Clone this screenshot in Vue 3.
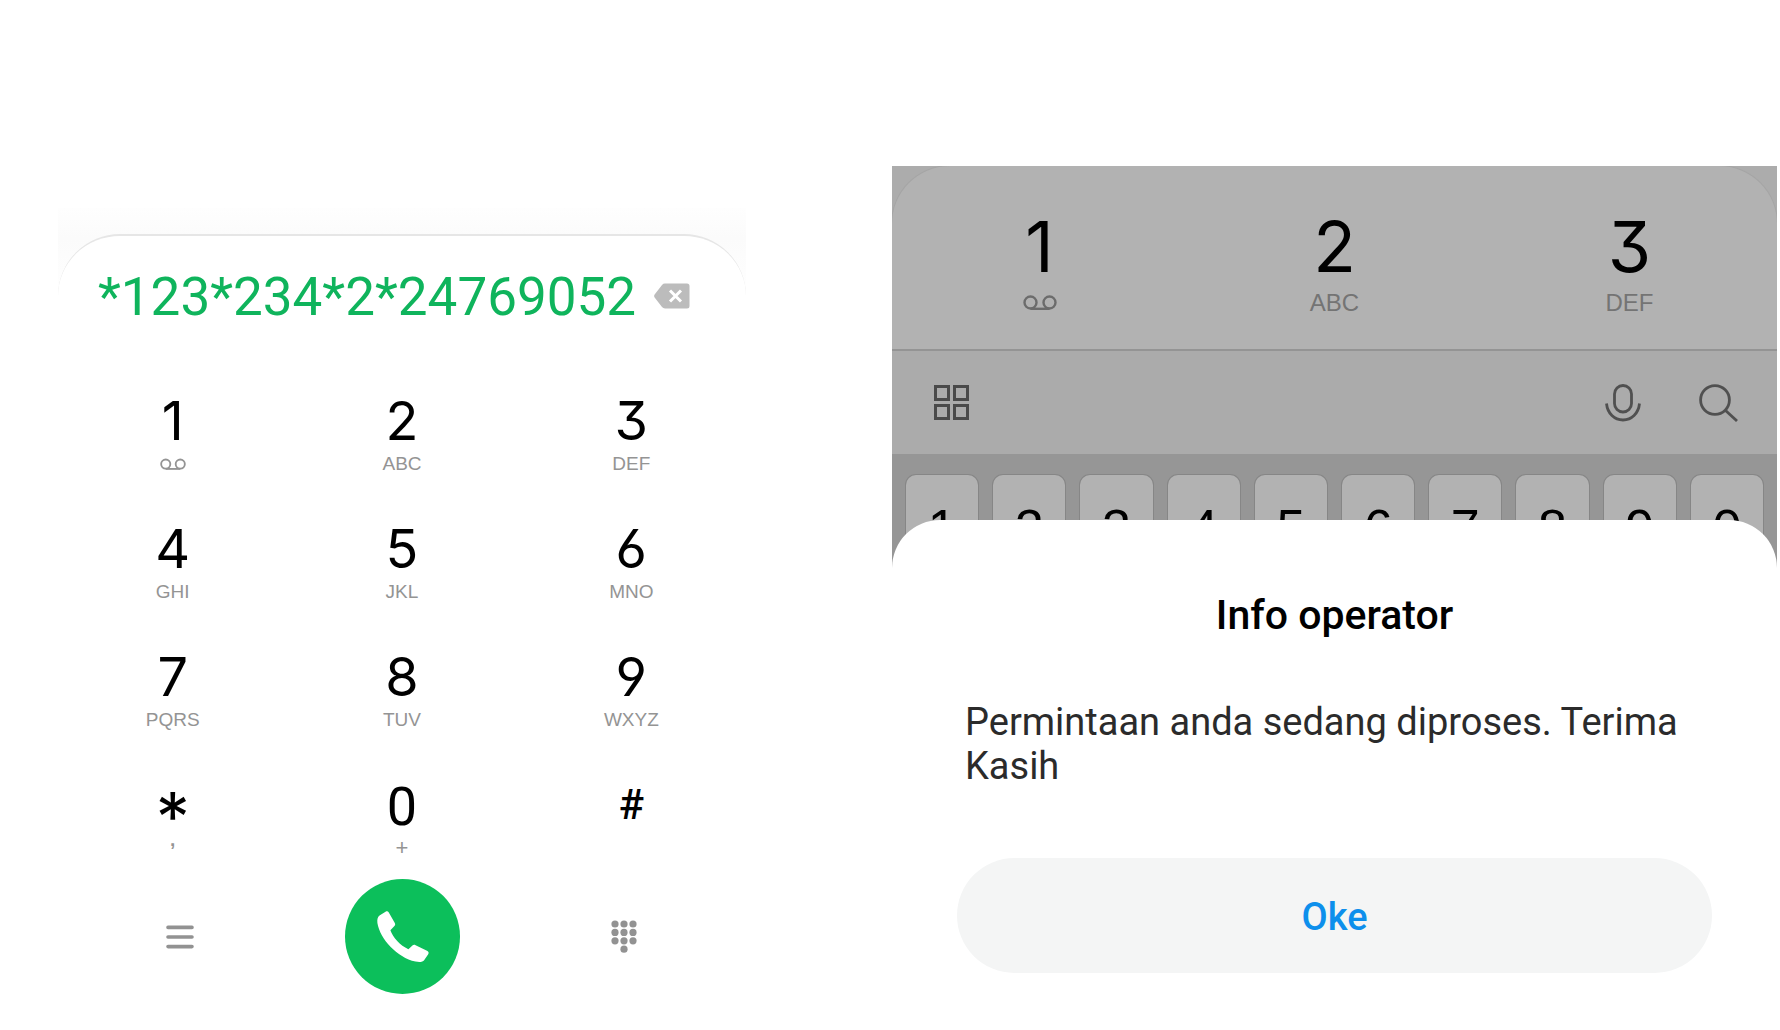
<template>
    <main class="page">
        <section class="dialer">
            <div class="dialer-card">
                <div class="display">
                    <input v-model="number" class="display-input" type="text" aria-label="Nomor" />
                    <button class="icon-button" type="button" aria-label="Hapus" @click="erase">
                        <svg width="36" height="26" viewBox="0 0 36 26">
                            <path d="M11 0.5H33a2.5 2.5 0 0 1 2.5 2.5V23a2.5 2.5 0 0 1-2.5 2.5H11a4 4 0 0 1-3-1.4L1 15a3 3 0 0 1 0-4L8 1.9a4 4 0 0 1 3-1.4z" fill="#bcbcbc" />
                            <path d="M16 7.5l11 11M27 7.5l-11 11" stroke="#fff" stroke-width="3" />
                        </svg>
                    </button>
                </div>
                <div class="keypad">
                    <button v-for="key in keys" :key="key.digit" class="key" type="button" @click="press(key.digit)">
                        <span class="key-digit" :class="key.kind">{{ key.digit }}</span>
                        <span v-if="key.voicemail" class="key-letters">
                            <svg width="26" height="13" viewBox="0 0 34 16" class="voicemail">
                                <circle cx="7.5" cy="7.5" r="6" />
                                <circle cx="26.5" cy="7.5" r="6" />
                                <path d="M7.5 13.8h19" />
                            </svg>
                        </span>
                        <span v-else class="key-letters">{{ key.letters }}</span>
                    </button>
                </div>
                <div class="actions">
                    <button class="icon-button" type="button" aria-label="Menu">
                        <svg width="28" height="24" viewBox="0 0 28 24">
                            <path d="M2 2.4h24M2 12h24M2 21.6h24" stroke="#929292" stroke-width="3.6" stroke-linecap="round" />
                        </svg>
                    </button>
                    <button class="call-button" type="button" aria-label="Panggil">
                        <svg width="54" height="52" viewBox="-2 0 54 52">
                            <path d="M2.5 4.5L8.5 0.8C10 0 11 .3 11.8 1.6L17.8 12C18.5 13.3 18.2 14.2 17.2 15.2L13.4 19.3C16 26.5 23 34.5 31.4 38.2L35.4 34.6C36.4 33.7 37.4 33.6 38.6 34.2L50 39.8C51.7 40.7 52 41.8 51.2 43.2L47.3 49C45.5 51.3 42.5 51.5 38.5 50.6C20 46.5 3 28 .4 12C0 8.5 .6 6 2.5 4.5Z" fill="#fff" />
                        </svg>
                    </button>
                    <button class="icon-button" type="button" aria-label="Papan tombol">
                        <svg width="26" height="34" viewBox="0 0 26 34">
                            <circle v-for="dot in dots" :key="dot.id" :cx="dot.x" :cy="dot.y" r="3.6" fill="#929292" />
                        </svg>
                    </button>
                </div>
            </div>
        </section>

        <section class="operator">
            <div class="backdrop">
                <div class="dimmed-pad">
                    <div v-for="key in keys.slice(0, 3)" :key="key.digit" class="dimmed-key">
                        <span class="dimmed-digit">{{ key.digit }}</span>
                        <span v-if="key.voicemail" class="dimmed-letters">
                            <svg width="34" height="16" viewBox="0 0 34 16" class="voicemail dark">
                                <circle cx="7.5" cy="7.5" r="6" />
                                <circle cx="26.5" cy="7.5" r="6" />
                                <path d="M7.5 13.8h19" />
                            </svg>
                        </span>
                        <span v-else class="dimmed-letters">{{ key.letters }}</span>
                    </div>
                </div>
            </div>
            <div class="toolbar">
                <button class="icon-button toolbar-start" type="button" aria-label="Aplikasi">
                    <svg width="36" height="36" viewBox="0 0 36 36" fill="none" stroke="#4a4a4a" stroke-width="3">
                        <rect x="2.5" y="1.5" width="13" height="13" />
                        <rect x="21.5" y="1.5" width="13" height="13" />
                        <rect x="2.5" y="20.5" width="13" height="13" />
                        <rect x="21.5" y="20.5" width="13" height="13" />
                    </svg>
                </button>
                <button class="icon-button" type="button" aria-label="Suara">
                    <svg width="36" height="38" viewBox="0 0 36 38" fill="none" stroke="#505050" stroke-width="2.8">
                        <rect x="9.5" y="1.5" width="17" height="26.5" rx="8.5" />
                        <path d="M1.5 19.5c1 10 8 16.5 16.5 16.5s15.5-6.5 16.5-16.5" />
                    </svg>
                </button>
                <button class="icon-button" type="button" aria-label="Cari">
                    <svg width="40" height="38" viewBox="0 0 40 38" fill="none" stroke="#505050" stroke-width="2.8">
                        <circle cx="16" cy="16" r="14.4" />
                        <path d="M26 26l12 11" />
                    </svg>
                </button>
            </div>
            <div class="keyboard">
                <span v-for="n in row" :key="n" class="keyboard-key">{{ n }}</span>
            </div>
            <div class="dialog" role="dialog" aria-labelledby="dialog-title">
                <h1 id="dialog-title" class="dialog-title">Info operator</h1>
                <p class="dialog-text">Permintaan anda sedang diproses. Terima Kasih</p>
                <button class="dialog-button" type="button">Oke</button>
            </div>
        </section>
    </main>
</template>

<script setup>
import { ref } from 'vue';

const number = ref('*123*234*2*24769052');

const keys = [
    { digit: '1', voicemail: true },
    { digit: '2', letters: 'ABC' },
    { digit: '3', letters: 'DEF' },
    { digit: '4', letters: 'GHI' },
    { digit: '5', letters: 'JKL' },
    { digit: '6', letters: 'MNO' },
    { digit: '7', letters: 'PQRS' },
    { digit: '8', letters: 'TUV' },
    { digit: '9', letters: 'WXYZ' },
    { digit: '*', letters: ',', kind: 'star' },
    { digit: '0', letters: '+', kind: 'zero' },
    { digit: '#', letters: '', kind: 'hash' }
];

const row = ['1', '2', '3', '4', '5', '6', '7', '8', '9', '0'];

// three rows of three, plus one dot below the middle
const dots = Array.from({ length: 10 }, (_, i) => ({
    id: i,
    x: i === 9 ? 13 : 4 + (i % 3) * 9,
    y: 4 + Math.floor(i / 3) * 8.4
}));

const press = (digit) => {
    number.value += digit;
};

const erase = () => {
    number.value = number.value.slice(0, -1);
};
</script>

<style>
body {
    margin: 0;
    background: #fff;
}
</style>

<style scoped>
.page {
    display: grid;
    grid-template-columns: minmax(0, 688fr) minmax(0, 885fr);
    gap: 146px;
    align-items: start;
    padding: 0 3px 0 58px;
    font-family: Roboto, sans-serif;
}

button {
    padding: 0;
    border: 0;
    background: none;
    font-family: inherit;
    cursor: pointer;
}

svg {
    display: block;
}

.dialer {
    margin-top: 208px;
    padding-top: 26px;
    background: linear-gradient(#fefefe, #fbfbfb 30px, #fff 96px);
}

.dialer-card {
    border-top: 2px solid #e6e6e6;
    border-radius: 62px 62px 0 0;
    background: #fff;
}

.display {
    display: flex;
    align-items: center;
    padding: 32px 56px 0 40px;
}

.display-input {
    flex: 1;
    min-width: 0;
    height: 54px;
    padding: 2px 0 0;
    border: 0;
    outline: 0;
    background: none;
    font-family: inherit;
    font-size: 53px;
    line-height: 54px;
    color: #0fb45c;
}

.keypad {
    display: grid;
    grid-template-columns: repeat(3, 1fr);
    row-gap: 48px;
    margin-top: 70px;
}

.key {
    display: flex;
    flex-direction: column;
    align-items: center;
    gap: 6px;
}

.key-digit {
    height: 54px;
    font-family: Inter, sans-serif;
    font-feature-settings: 'cv09', 'cv03', 'cv04';
    font-size: 54px;
    line-height: 54px;
    color: #000;
}

.key-digit.star {
    font-size: 68px;
    line-height: 76px;
}

.key-digit.zero {
    font-family: Roboto, sans-serif;
    line-height: 58px;
}

.key-digit.hash {
    font-family: Roboto, sans-serif;
    font-size: 42px;
    font-weight: 500;
    line-height: 54px;
}

.key-letters {
    display: flex;
    align-items: center;
    height: 20px;
    font-family: 'Liberation Sans', sans-serif;
    font-size: 19px;
    line-height: 20px;
    color: #949494;
}

.star + .key-letters {
    height: 4px;
    font-weight: 700;
}

.zero + .key-letters {
    font-size: 22px;
}

.voicemail {
    fill: none;
    stroke: #949494;
    stroke-width: 2.4;
}

.voicemail.dark {
    stroke: #6c6c6c;
}

.actions {
    display: grid;
    grid-template-columns: repeat(3, 1fr);
    place-items: center;
    margin-top: 21px;
    padding: 0 11px;
}

.call-button {
    display: grid;
    place-items: center;
    width: 115px;
    height: 115px;
    border-radius: 50%;
    background: #0cbf5b;
}

.operator {
    margin-top: 166px;
}

.backdrop {
    overflow: hidden;
    background: #acacac;
}

.dimmed-pad {
    display: grid;
    grid-template-columns: repeat(3, 1fr);
    padding: 46px 0 33px;
    border-radius: 58px 58px 0 0;
    background: #b2b2b2;
    box-shadow: 0 0 0 1px #a5a5a5;
}

.dimmed-key {
    display: flex;
    flex-direction: column;
    align-items: center;
    gap: 8px;
}

.dimmed-digit {
    height: 70px;
    font-family: Inter, sans-serif;
    font-feature-settings: 'cv09', 'cv03', 'cv04';
    font-size: 70px;
    line-height: 70px;
    color: #000;
}

.dimmed-letters {
    display: flex;
    align-items: center;
    height: 26px;
    font-family: 'Liberation Sans', sans-serif;
    font-size: 24px;
    line-height: 26px;
    color: #747474;
}

.toolbar {
    display: flex;
    align-items: center;
    gap: 58px;
    height: 103px;
    padding: 0 38px 0 41px;
    border-top: 2px solid #949494;
    background: #ababab;
}

.toolbar-start {
    margin-right: auto;
}

.keyboard {
    display: grid;
    grid-template-columns: repeat(10, 1fr);
    gap: 15px;
    height: 93px;
    padding: 21px 14px 0;
    background: #969696;
}

.keyboard-key {
    border-radius: 10px 10px 0 0;
    background: #b2b2b2;
    box-shadow: 0 0 0 1px #868686;
    font-family: 'Liberation Sans', sans-serif;
    font-size: 52px;
    line-height: 106px;
    text-align: center;
    color: #000;
}

.dialog {
    position: relative;
    margin-top: -48px;
    padding: 71px 65px 56px;
    border-radius: 48px 48px 0 0;
    background: #fff;
}

.dialog-title {
    margin: 0;
    font-size: 41px;
    font-weight: 500;
    line-height: 48px;
    text-align: center;
    color: #000;
}

.dialog-text {
    margin: 61px 0 70px;
    padding: 0 8px;
    font-size: 38px;
    line-height: 44px;
    color: #2b2b2b;
}

.dialog-button {
    width: 100%;
    height: 115px;
    padding-top: 2px;
    border-radius: 58px;
    background: #f4f5f5;
    font-size: 38px;
    font-weight: 500;
    line-height: 44px;
    color: #0d8fec;
}
</style>
